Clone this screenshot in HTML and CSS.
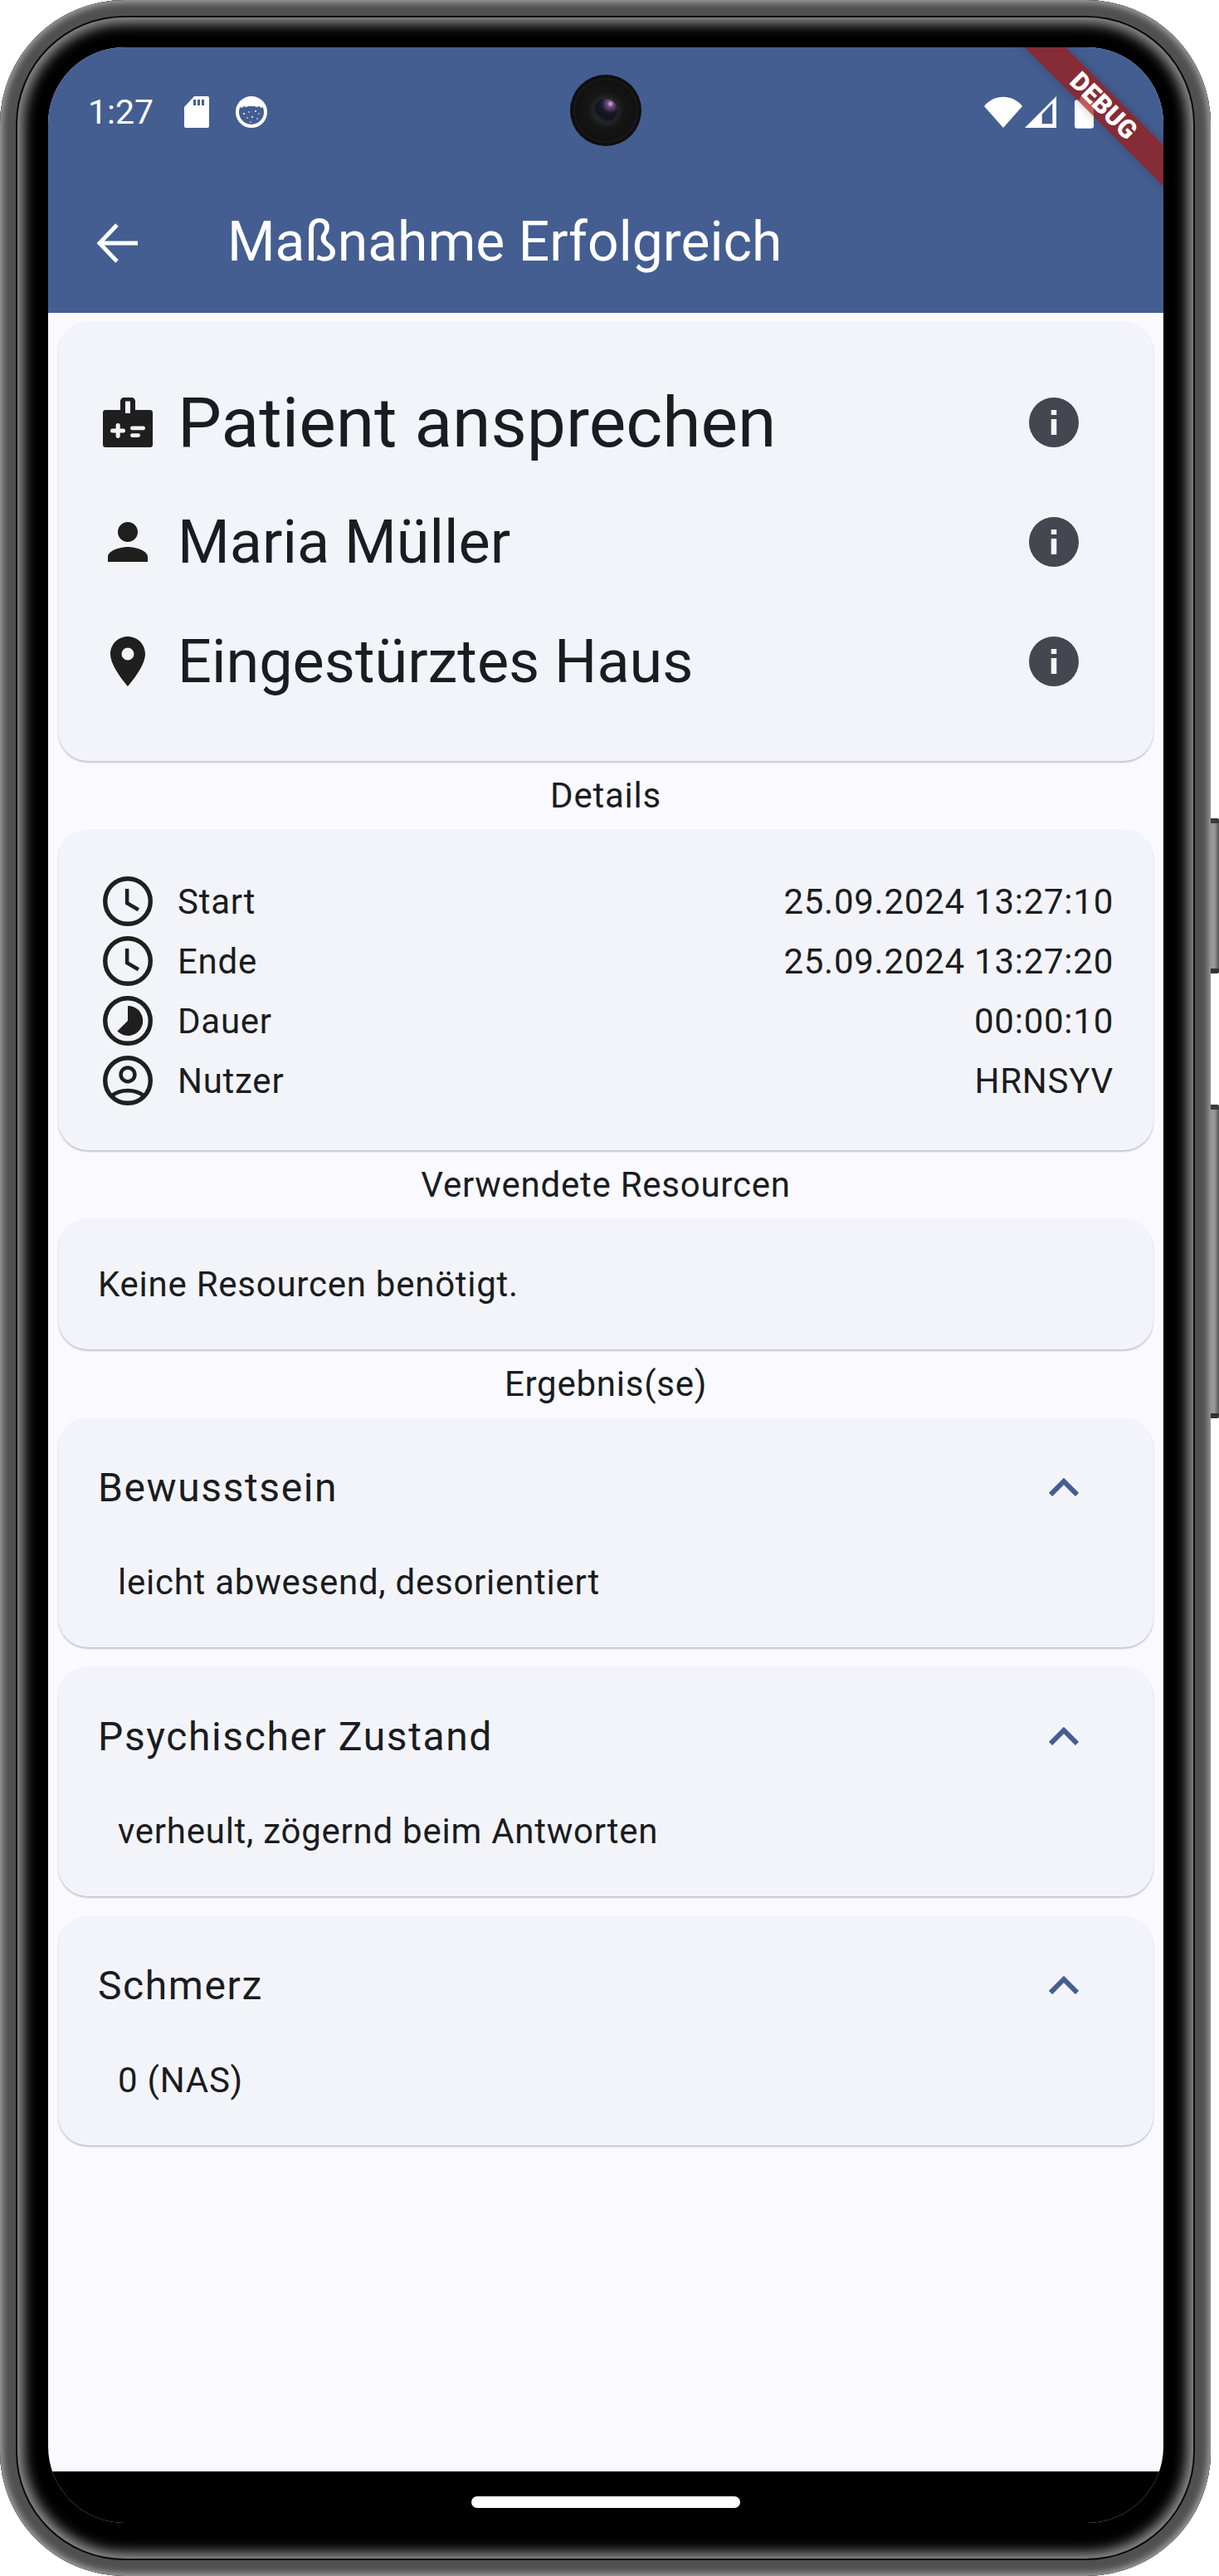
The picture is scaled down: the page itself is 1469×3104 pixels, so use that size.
FILE: index.html
```html
<!DOCTYPE html>
<html lang="de">
<head>
    <meta charset="UTF-8">
    <title>Maßnahme Erfolgreich</title>
    <link rel="stylesheet" href="styles.css">
</head>
<body>
    <div class="device">
        <div class="button button-power"></div>
        <div class="button button-volume"></div>
        <div class="phone">
            <div class="screen">
                <header class="appbar">
                    <div class="statusbar">
                        <span class="clock">1:27</span>
                        <svg class="st-sd" viewBox="0 0 30 38"><path fill="#fff" fill-rule="evenodd" d="M12 0h16a2 2 0 0 1 2 2v34a2 2 0 0 1-2 2H2a2 2 0 0 1-2-2V13zM11 4v7h3V4zm5 0v7h3V4zm5 0v7h3V4z"/></svg>
                        <svg class="st-app" viewBox="0 0 38 38">
                            <circle cx="19" cy="19" r="17" fill="none" stroke="#fff" stroke-width="4"/>
                            <path fill="#fff" d="M5 8C10 1 28 1 33 8v5l-3 1-1-2-4 1-2-1-8 0-2 1-4-1-1 2-3-1z"/>
                            <g fill="#fff"><circle cx="10" cy="21" r="1"/><circle cx="16" cy="19" r=".8"/><circle cx="24" cy="18" r="1"/><circle cx="28" cy="21" r=".8"/><circle cx="14" cy="26" r=".8"/><circle cx="20" cy="25" r="1"/><circle cx="26" cy="27" r=".8"/><circle cx="18" cy="31" r=".8"/></g>
                        </svg>
                        <span class="spacer"></span>
                        <svg class="st-wifi" viewBox="0 0 46 38"><path fill="#fff" d="M0 12C12-3 34-3 46 12L23 38z"/></svg>
                        <svg class="st-signal" viewBox="0 0 38 38"><path fill="#fff" fill-rule="evenodd" d="M38 0v38H0zM33.300 8.300 20.700 21.700v11.600h12.600z"/></svg>
                        <svg class="st-battery" viewBox="0 0 24 40"><path fill="#fff" d="M7 0h10v4h4a3 3 0 0 1 3 3v30a3 3 0 0 1-3 3H3a3 3 0 0 1-3-3V7a3 3 0 0 1 3-3h4z"/></svg>
                    </div>
                    <div class="toolbar">
                        <svg class="back" viewBox="0 0 50 48"><path fill="none" stroke="#fff" stroke-width="5" d="M50 24H4M25 2 4 24l21 22"/></svg>
                        <h1>Maßnahme Erfolgreich</h1>
                    </div>
                </header>

                <main class="content">
                    <section class="card card-head">
                        <div class="head-row">
                            <svg class="head-icon" viewBox="0 0 24 24">
                                <path fill="#1f1f1f" d="M3 7h6V3.500C9 2.700 9.700 2 10.500 2h3c.8 0 1.500.7 1.500 1.500V7h6c.6 0 1 .4 1 1v13c0 .6-.4 1-1 1H3c-.6 0-1-.4-1-1V8c0-.6.4-1 1-1z"/>
                                <g fill="#f3f4fa">
                                    <rect x="11" y="3.500" width="2" height="4.800"/>
                                    <rect x="5" y="14.500" width="6" height="1.700" rx=".8"/>
                                    <rect x="7.200" y="12.300" width="1.700" height="6" rx=".8"/>
                                    <rect x="13" y="13.500" width="6" height="1.600" rx=".8"/>
                                    <rect x="13" y="16.400" width="4" height="1.600" rx=".8"/>
                                </g>
                            </svg>
                            <span class="head-text head-text-large">Patient ansprechen</span>
                            <svg class="info" viewBox="0 0 24 24"><circle cx="12" cy="12" r="12" fill="#45464f"/><rect x="10.700" y="10.400" width="2.600" height="7.600" fill="#f3f4fa"/><rect x="10.700" y="6" width="2.600" height="2.400" fill="#f3f4fa"/></svg>
                        </div>
                        <div class="head-row">
                            <svg class="head-icon" viewBox="0 0 24 24"><path fill="#1f1f1f" d="M12 12c2.200 0 4-1.800 4-4s-1.800-4-4-4-4 1.800-4 4 1.800 4 4 4zm0 2c-2.700 0-8 1.300-8 4v2h16v-2c0-2.700-5.300-4-8-4z"/></svg>
                            <span class="head-text">Maria Müller</span>
                            <svg class="info" viewBox="0 0 24 24"><circle cx="12" cy="12" r="12" fill="#45464f"/><rect x="10.700" y="10.400" width="2.600" height="7.600" fill="#f3f4fa"/><rect x="10.700" y="6" width="2.600" height="2.400" fill="#f3f4fa"/></svg>
                        </div>
                        <div class="head-row">
                            <svg class="head-icon" viewBox="0 0 24 24"><path fill="#1f1f1f" d="M12 2C8.100 2 5 5.100 5 9c0 5.200 7 13 7 13s7-7.800 7-13c0-3.900-3.100-7-7-7zm0 9.500a2.500 2.500 0 1 1 0-5 2.500 2.500 0 0 1 0 5z"/></svg>
                            <span class="head-text">Eingestürztes Haus</span>
                            <svg class="info" viewBox="0 0 24 24"><circle cx="12" cy="12" r="12" fill="#45464f"/><rect x="10.700" y="10.400" width="2.600" height="7.600" fill="#f3f4fa"/><rect x="10.700" y="6" width="2.600" height="2.400" fill="#f3f4fa"/></svg>
                        </div>
                    </section>

                    <div class="caption">Details</div>
                    <section class="card card-details">
                        <div class="detail-row">
                            <svg class="detail-icon" viewBox="0 0 24 24"><circle cx="12" cy="12" r="9.100" fill="none" stroke="#1f1f1f" stroke-width="1.800"/><path fill="none" stroke="#1f1f1f" stroke-width="1.500" d="M11.700 7v5.700l4.600 2.700"/></svg>
                            <span class="detail-label">Start</span>
                            <span class="detail-value">25.09.2024 13:27:10</span>
                        </div>
                        <div class="detail-row">
                            <svg class="detail-icon" viewBox="0 0 24 24"><circle cx="12" cy="12" r="9.100" fill="none" stroke="#1f1f1f" stroke-width="1.800"/><path fill="none" stroke="#1f1f1f" stroke-width="1.500" d="M11.700 7v5.700l4.600 2.700"/></svg>
                            <span class="detail-label">Ende</span>
                            <span class="detail-value">25.09.2024 13:27:20</span>
                        </div>
                        <div class="detail-row">
                            <svg class="detail-icon" viewBox="0 0 24 24"><circle cx="12" cy="12" r="9.100" fill="none" stroke="#1f1f1f" stroke-width="1.800"/><path fill="#1f1f1f" d="M12 6a6 6 0 1 1-4.200 10.200L12 12z"/></svg>
                            <span class="detail-label">Dauer</span>
                            <span class="detail-value">00:00:10</span>
                        </div>
                        <div class="detail-row">
                            <svg class="detail-icon" viewBox="0 0 24 24"><circle cx="12" cy="12" r="9.100" fill="none" stroke="#1f1f1f" stroke-width="1.800"/><circle cx="12" cy="9.600" r="2.800" fill="none" stroke="#1f1f1f" stroke-width="1.500"/><path fill="none" stroke="#1f1f1f" stroke-width="1.600" d="M5.500 18.200C9 15.300 15 15.300 18.500 18.200"/></svg>
                            <span class="detail-label">Nutzer</span>
                            <span class="detail-value">HRNSYV</span>
                        </div>
                    </section>

                    <div class="caption">Verwendete Resourcen</div>
                    <section class="card card-note">Keine Resourcen benötigt.</section>

                    <div class="caption">Ergebnis(se)</div>
                    <section class="card card-result">
                        <div class="result-head">
                            <span class="result-title">Bewusstsein</span>
                            <svg class="chevron" viewBox="0 0 36 22"><path fill="none" stroke="#445e91" stroke-width="6" d="M2 20 18 4l16 16"/></svg>
                        </div>
                        <div class="result-body">leicht abwesend, desorientiert</div>
                    </section>
                    <section class="card card-result">
                        <div class="result-head">
                            <span class="result-title">Psychischer Zustand</span>
                            <svg class="chevron" viewBox="0 0 36 22"><path fill="none" stroke="#445e91" stroke-width="6" d="M2 20 18 4l16 16"/></svg>
                        </div>
                        <div class="result-body">verheult, zögernd beim Antworten</div>
                    </section>
                    <section class="card card-result">
                        <div class="result-head">
                            <span class="result-title">Schmerz</span>
                            <svg class="chevron" viewBox="0 0 36 22"><path fill="none" stroke="#445e91" stroke-width="6" d="M2 20 18 4l16 16"/></svg>
                        </div>
                        <div class="result-body">0 (NAS)</div>
                    </section>
                </main>

                <div class="navbar"><div class="home-pill"></div></div>

                <div class="debug-ribbon">DEBUG</div>
            </div>
            <div class="camera"><div class="lens"></div></div>
        </div>
    </div>
</body>
</html>
```

FILE: styles.css
```css
* {
    box-sizing: border-box;
}
body {
    margin: 0;
    background-color: white;
    font-family: Roboto, "Liberation Sans", sans-serif;
    color: #1a1c20;
}
.device {
    position: relative;
    width: 1469px;
    height: 3104px;
    overflow: hidden;
}
.button {
    position: absolute;
    left: 1450px;
    width: 19px;
    background: linear-gradient(to right, #888 0%, #9a9a9a 70%, #555 100%);
    border-radius: 2px;
    border-top: 6px solid #3a3a3a;
    border-bottom: 6px solid #333;
}
.button-power {
    top: 986px;
    height: 187px;
}
.button-volume {
    top: 1331px;
    height: 378px;
}
.phone {
    position: relative;
    width: 1459px;
    height: 3104px;
    padding: 57px 57px 0 58px;
    background-color: black;
    border-radius: 150px;
    box-shadow: inset 0 0 8px 3px #a8a8a8, inset 0 0 0 19px #505050, inset 0 0 0 21px #0a0a0a, inset 0 0 16px 28px #9a9a9a;
}
.screen {
    position: relative;
    height: 2983px;
    border-radius: 92px;
    overflow: hidden;
    display: flex;
    flex-direction: column;
    background-color: #f9f9ff;
}

/* app bar */
.appbar {
    flex: none;
    height: 320px;
    padding-top: 1px;
    background-color: #445e91;
    color: white;
}
.statusbar {
    display: flex;
    align-items: center;
    height: 84px;
    margin-top: 35px;
    padding: 0 84px 0 48px;
}
.clock {
    font-size: 41px;
    width: 116px;
}
.st-sd {
    width: 30px;
    height: 38px;
    margin-right: 32px;
}
.st-app {
    width: 38px;
    height: 38px;
}
.spacer {
    flex: 1;
}
.st-wifi {
    width: 46px;
    height: 38px;
    margin-right: 3px;
}
.st-signal {
    width: 38px;
    height: 38px;
    margin-right: 22px;
}
.st-battery {
    width: 23px;
    height: 39px;
}
.toolbar {
    display: flex;
    align-items: center;
    height: 152px;
    margin-top: 38px;
    padding-left: 58px;
}
.back {
    width: 50px;
    height: 48px;
    margin-top: 4px;
    margin-right: 108px;
}
.toolbar h1 {
    margin: 0;
    font-size: 66px;
    font-weight: 400;
}

/* cards */
.content {
    flex: 1;
    padding: 11px 12px 0;
}
.card {
    background-color: #f3f4fa;
    border-radius: 36px;
    box-shadow: 0 2px 2px rgba(0, 0, 0, 0.2), 0 0 2px rgba(0, 0, 0, 0.06);
}
.caption {
    height: 83px;
    line-height: 83px;
    text-align: center;
    font-size: 42px;
    letter-spacing: 0.75px;
}
.card-head {
    height: 529px;
    padding: 49px 90px 0 48px;
}
.head-row {
    display: flex;
    align-items: center;
    height: 144px;
}
.head-icon {
    width: 72px;
    height: 72px;
    margin-right: 24px;
}
.head-text {
    flex: 1;
    font-size: 72px;
}
.head-text-large {
    font-size: 84px;
}
.info {
    width: 60px;
    height: 60px;
}
.card-details {
    height: 386px;
    padding: 50px 48px 0 48px;
}
.detail-row {
    display: flex;
    align-items: center;
    height: 72px;
}
.detail-icon {
    width: 72px;
    height: 72px;
}
.detail-label {
    flex: 1;
    margin-left: 24px;
    font-size: 42px;
    letter-spacing: 0.75px;
}
.detail-value {
    font-size: 42px;
    letter-spacing: 0.75px;
}
.card-note {
    height: 157px;
    padding-left: 48px;
    display: flex;
    align-items: center;
    font-size: 42px;
    letter-spacing: 0.75px;
}
.card-result {
    height: 276px;
    margin-bottom: 24px;
    padding: 0 90px 0 48px;
}
.result-head {
    display: flex;
    align-items: center;
    justify-content: space-between;
    height: 166px;
}
.result-title {
    font-size: 48px;
    letter-spacing: 1.6px;
}
.chevron {
    width: 36px;
    height: 22px;
}
.result-body {
    padding: 7px 0 0 24px;
    font-size: 42px;
    letter-spacing: 0.75px;
}

/* bottom of the phone */
.navbar {
    flex: none;
    height: 62px;
    background-color: black;
    display: flex;
    justify-content: center;
    padding-top: 30px;
}
.home-pill {
    width: 324px;
    height: 14px;
    border-radius: 7px;
    background-color: white;
}
.debug-ribbon {
    position: absolute;
    top: 53px;
    right: -98px;
    width: 340px;
    height: 35px;
    transform: rotate(45deg);
    background-color: rgba(161, 23, 17, 0.7);
    box-shadow: 0 0 14px rgba(0, 0, 0, 0.2);
    color: white;
    text-align: center;
    font-family: Roboto, sans-serif;
    font-weight: 900;
    font-size: 31px;
    line-height: 35px;
}
.camera {
    position: absolute;
    left: 687px;
    top: 90px;
    width: 86px;
    height: 86px;
    border-radius: 50%;
    background: radial-gradient(circle, #1e1e1e 0, #111 60%, #1a1a1a 62%, #0e0e0e 66%, #0c0c0c 90%, #000 96%);
    display: flex;
    align-items: center;
    justify-content: center;
}
.lens {
    width: 28px;
    height: 28px;
    border-radius: 50%;
    background: radial-gradient(circle at 70% 22%, #d8b8e0 0, #6a4a80 14%, #181824 38%, #10141c 62%, #1d4048 92%);
    box-shadow: 0 0 6px 3px #2a2a2a;
}
```
